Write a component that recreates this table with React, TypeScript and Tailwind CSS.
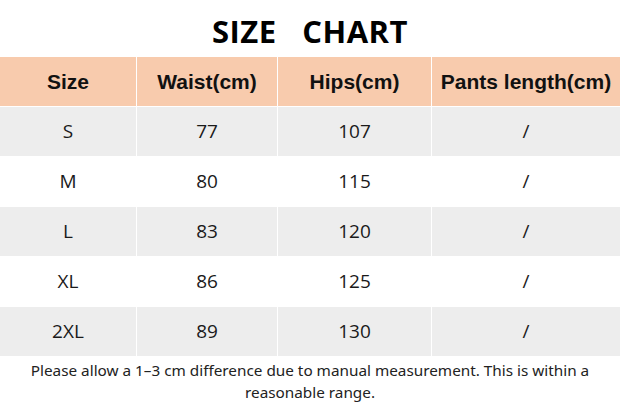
import React from 'react';

const rows = [
  { size: 'S', waist: '77', hips: '107', length: '/' },
  { size: 'M', waist: '80', hips: '115', length: '/' },
  { size: 'L', waist: '83', hips: '120', length: '/' },
  { size: 'XL', waist: '86', hips: '125', length: '/' },
  { size: '2XL', waist: '89', hips: '130', length: '/' },
];

const headers = ['Size', 'Waist(cm)', 'Hips(cm)', 'Pants length(cm)'];

export default function App() {
  return (
    <div className="w-[620px] h-[410px] bg-white overflow-hidden">
      {/* Title */}
      <div className="h-[57px] flex items-center justify-center pt-[6px]">
        <h1 className="whitespace-pre text-[31px] font-bold text-black tracking-[0.5px] font-['Open_Sans',sans-serif]">
          SIZE   CHART
        </h1>
      </div>

      {/* Table */}
      <div className="grid grid-cols-[136px_140px_153px_1fr] gap-px bg-white">
        {headers.map((h) => (
          <div
            key={h}
            className="h-[49px] bg-[#f8cbad] flex items-center justify-center text-[21px] font-bold text-[#111] font-['Liberation_Sans',Arial,sans-serif]"
          >
            {h}
          </div>
        ))}
        {rows.map((r, i) => {
          const bg = i % 2 === 0 ? 'bg-[#ededed]' : 'bg-white';
          return (
            <React.Fragment key={r.size}>
              {[r.size, r.waist, r.hips, r.length].map((v, j) => (
                <div
                  key={j}
                  className={`h-[49px] ${bg} flex items-center justify-center text-[19px] text-[#1a1a1a] font-['Open_Sans',sans-serif]`}
                >
                  {v}
                </div>
              ))}
            </React.Fragment>
          );
        })}
      </div>

      {/* Note */}
      <p className="mt-[3px] px-[26px] text-center text-[15.3px] leading-[22px] text-[#222] font-['Noto_Sans',sans-serif]">
        Please allow a 1–3 cm difference due to manual measurement. This is within a reasonable range.
      </p>
    </div>
  );
}
